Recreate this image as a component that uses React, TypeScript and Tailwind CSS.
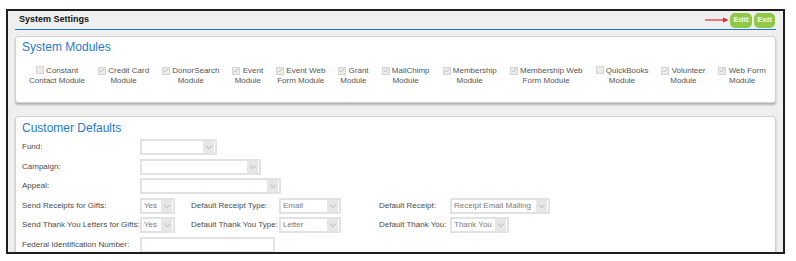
const modules = [
  { top: "Constant", bottom: "Contact Module", checked: false },
  { top: "Credit Card", bottom: "Module", checked: true },
  { top: "DonorSearch", bottom: "Module", checked: true },
  { top: "Event", bottom: "Module", checked: true },
  { top: "Event Web", bottom: "Form Module", checked: true },
  { top: "Grant", bottom: "Module", checked: true },
  { top: "MailChimp", bottom: "Module", checked: true },
  { top: "Membership", bottom: "Module", checked: true },
  { top: "Membership Web", bottom: "Form Module", checked: true },
  { top: "QuickBooks", bottom: "Module", checked: false },
  { top: "Volunteer", bottom: "Module", checked: true },
  { top: "Web Form", bottom: "Module", checked: true },
];

function Check({ checked }: { checked: boolean }) {
  return (
    <span className="inline-flex h-[8px] w-[8px] items-center justify-center border border-[#d4d4d4] bg-[#ebebeb] align-[-1px]">
      {checked && (
        <svg viewBox="0 0 8 8" className="h-[7px] w-[7px]">
          <path d="M1.2 4.2 L3 6 L6.8 1.8" fill="none" stroke="#a8a8a8" strokeWidth="0.9" />
        </svg>
      )}
    </span>
  );
}

function Select({ width, value }: { width: string; value?: string }) {
  return (
    <div className={`flex h-[16px] items-center justify-between gap-[1px] border-2 border-[#e2e2e2] bg-white pl-[2px] pr-[1px] ${width}`}>
      <span className="whitespace-nowrap text-[8px] leading-none text-[#7a7a7a]">{value}</span>
      <span className="flex h-[12px] w-[11px] shrink-0 items-center justify-center bg-[#e6e6e6]">
        <svg viewBox="0 0 10 10" className="h-[8px] w-[8px]">
          <path d="M1.5 3.5 L5 7 L8.5 3.5" fill="none" stroke="#9a9a9a" strokeWidth="0.9" />
        </svg>
      </span>
    </div>
  );
}

function Label({ children, className = "" }: { children: React.ReactNode; className?: string }) {
  return <span className={`whitespace-nowrap text-[8px] leading-none text-[#4a4a4a] ${className}`}>{children}</span>;
}

export default function App() {
  return (
    <div className="h-[261px] w-[796px] overflow-hidden bg-white pl-[6px] pt-[9px] font-['Liberation_Sans',Arial,sans-serif]">
      <div className="h-[245px] w-[779px] overflow-hidden border-2 border-[#1e1e1e] bg-[#efefef] px-[7px]">
        {/* header */}
        <div className="flex h-[19px] items-center justify-between border-b border-[#1b7bcb] pl-[4px] pr-[1px]">
          <span className="text-[9px] font-bold text-[#111]">System Settings</span>
          <div className="flex items-center">
            <svg width="24" height="6" viewBox="0 0 24 6" className="mr-[1px]">
              <line x1="0" y1="3" x2="19" y2="3" stroke="#e3262b" strokeWidth="1.2" />
              <path d="M18 0.5 L23.5 3 L18 5.5 Z" fill="#e3262b" />
            </svg>
            <span className="flex h-[15px] w-[22px] items-center justify-center rounded-[5px] bg-[#90c847] text-[8px] font-bold text-[#f4f9ea]">Edit</span>
            <span className="ml-[2px] flex h-[15px] w-[21px] items-center justify-center rounded-[5px] bg-[#90c847] text-[8px] font-bold text-[#f4f9ea]">Exit</span>
          </div>
        </div>

        {/* system modules */}
        <div className="mt-[6px] h-[67px] rounded-[3px] border border-[#cfcfcf] bg-white shadow-[0_2px_2px_rgba(0,0,0,0.25)]">
          <div className="pl-[6px] pt-[2px] text-[12px] leading-[16px] text-[#1f7bc6]">System Modules</div>
          <div className="mt-[11px] flex justify-between pl-[13px] pr-[9px]">
            {modules.map((m) => (
              <div key={m.top} className="text-center text-[8px] leading-[10px] text-[#555]">
                <div className="whitespace-nowrap">
                  <Check checked={m.checked} /> {m.top}
                </div>
                <div className="whitespace-nowrap">{m.bottom}</div>
              </div>
            ))}
          </div>
        </div>

        {/* customer defaults */}
        <div className="mt-[13px] h-[200px] rounded-[3px] border border-[#cfcfcf] bg-white shadow-[0_2px_2px_rgba(0,0,0,0.25)]">
          <div className="pl-[6px] pt-[3px] text-[12px] leading-[16px] text-[#1f7bc6]">Customer Defaults</div>
          <div className="mt-[3px] flex flex-col gap-[3.5px] pl-[6px]">
            <div className="flex items-center">
              <Label className="w-[118px]">Fund:</Label>
              <Select width="w-[77px]" />
            </div>
            <div className="flex items-center">
              <Label className="w-[118px]">Campaign:</Label>
              <Select width="w-[121px]" />
            </div>
            <div className="flex items-center">
              <Label className="w-[118px]">Appeal:</Label>
              <Select width="w-[141px]" />
            </div>
            <div className="flex items-center">
              <Label className="w-[118px]">Send Receipts for Gifts:</Label>
              <Select width="w-[35px]" value="Yes" />
              <Label className="ml-[16px] w-[88px]">Default Receipt Type:</Label>
              <Select width="w-[62px]" value="Email" />
              <Label className="ml-[38px] w-[71px]">Default Receipt:</Label>
              <Select width="w-[100px]" value="Receipt Email Mailing" />
            </div>
            <div className="flex items-center">
              <Label className="w-[118px]">Send Thank You Letters for Gifts:</Label>
              <Select width="w-[35px]" value="Yes" />
              <Label className="ml-[16px] w-[88px]">Default Thank You Type:</Label>
              <Select width="w-[62px]" value="Letter" />
              <Label className="ml-[38px] w-[71px]">Default Thank You:</Label>
              <Select width="w-[59px]" value="Thank You" />
            </div>
            <div className="flex items-center">
              <Label className="w-[118px]">Federal Identification Number:</Label>
              <div className="h-[16px] w-[135px] border-2 border-[#e2e2e2] bg-white" />
            </div>
          </div>
        </div>
      </div>
    </div>
  );
}
